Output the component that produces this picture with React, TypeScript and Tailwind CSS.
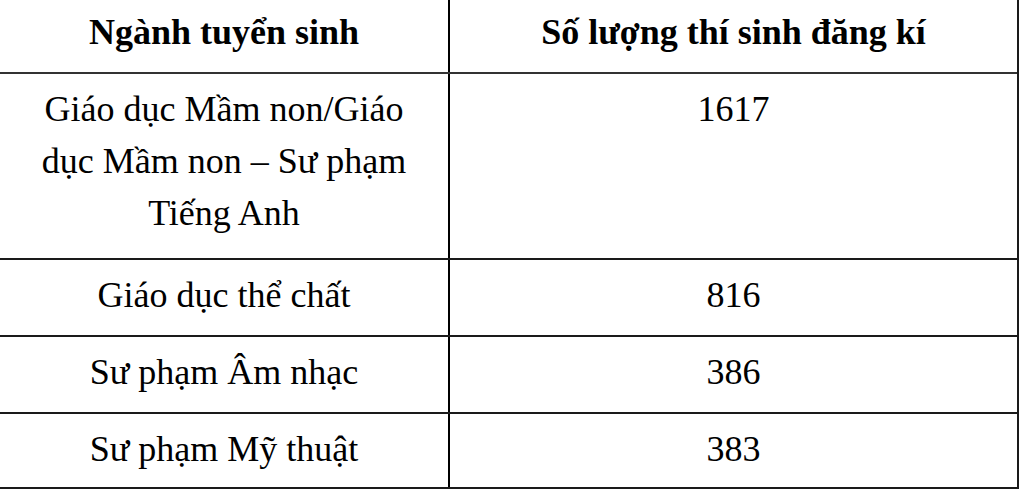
const rows = [
  { name: ["Giáo dục Mầm non/Giáo", "dục Mầm non – Sư phạm", "Tiếng Anh"], count: "1617", h: "h-[186px]" },
  { name: ["Giáo dục thể chất"], count: "816", h: "h-[77px]" },
  { name: ["Sư phạm Âm nhạc"], count: "386", h: "h-[77px]" },
  { name: ["Sư phạm Mỹ thuật"], count: "383", h: "h-[73px]" },
];

export default function App() {
  return (
    <div className="w-[1020px] h-[490px] bg-white text-black overflow-hidden font-['Liberation_Serif','Times_New_Roman',serif] text-[36px] leading-[52px]">
      <div className="w-[1019px] border-r-2 border-b-2 border-[#1a1a1a]">
        <div className="grid grid-cols-[450px_1fr] h-[74px] border-b-2 border-[#333]">
          <div className="border-r-2 border-black flex items-center justify-center font-bold pb-[8px]">
            Ngành tuyển sinh
          </div>
          <div className="flex items-center justify-center font-bold pb-[8px]">
            Số lượng thí sinh đăng kí
          </div>
        </div>
        {rows.map((r, i) => (
          <div
            key={i}
            className={`grid grid-cols-[450px_1fr] ${r.h} ${i < rows.length - 1 ? "border-b-2 border-[#1a1a1a]" : ""}`}
          >
            <div className="border-r-2 border-black text-center pt-[9px]">
              {r.name.map((l, j) => (
                <div key={j}>{l}</div>
              ))}
            </div>
            <div className="text-center pt-[9px]">{r.count}</div>
          </div>
        ))}
      </div>
    </div>
  );
}
